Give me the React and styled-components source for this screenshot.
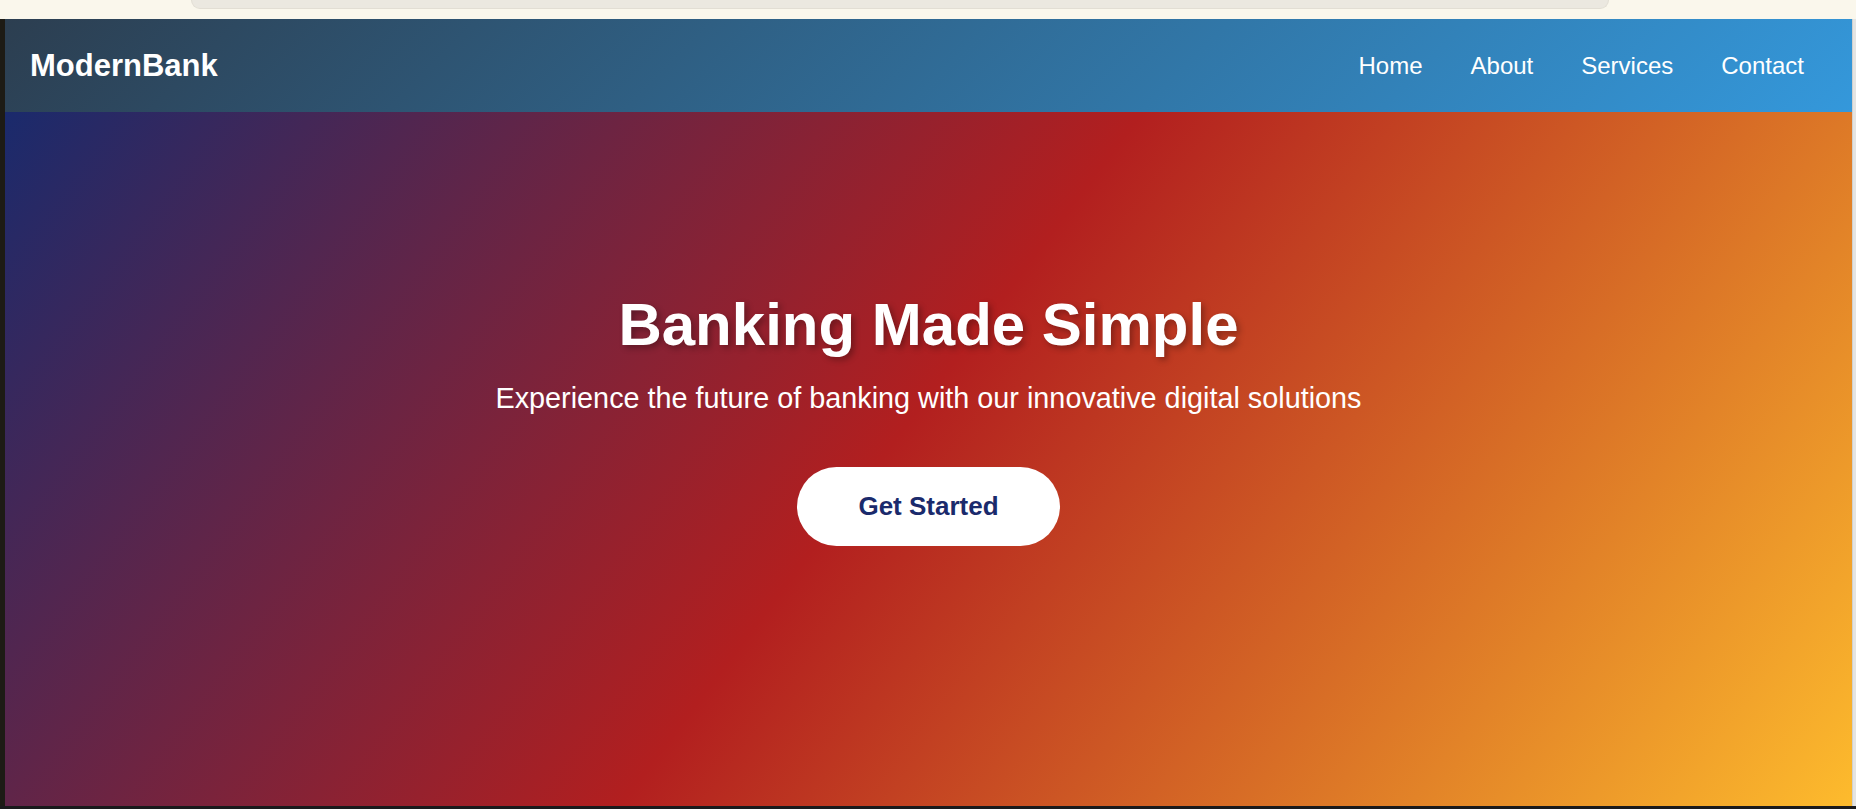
import React from 'react';
import styled, {createGlobalStyle} from 'styled-components';

const GlobalStyle = createGlobalStyle`
  html, body {
    margin: 0;
    padding: 0;
    overflow: hidden;
  }
  body {
    font-family: "Liberation Sans", Arial, sans-serif;
  }
  * {
    box-sizing: border-box;
  }
`

const links = ['Home', 'About', 'Services', 'Contact']

const App = () => {
    return (
        <Frame>
            <GlobalStyle/>
            <ChromeBar>
                <AddressPill/>
            </ChromeBar>
            <MiddleRow>
                <LeftEdge/>
                <Page>
                    <Header>
                        <Logo>ModernBank</Logo>
                        <Nav>
                            {links.map((link) => (
                                <NavLink key={link} href="#">{link}</NavLink>
                            ))}
                        </Nav>
                    </Header>
                    <Hero>
                        <Title>Banking Made Simple</Title>
                        <Subtitle>Experience the future of banking with our innovative digital solutions</Subtitle>
                        <CtaButton>Get Started</CtaButton>
                    </Hero>
                </Page>
                <ScrollTrack/>
            </MiddleRow>
            <BottomEdge/>
        </Frame>
    )
}
export default App

const Frame = styled.div`
  width: 1856px;
  height: 809px;
  display: flex;
  flex-direction: column;
  background: #1b1a16;
`

const ChromeBar = styled.div`
  height: 19px;
  flex-shrink: 0;
  background: #faf7ec;
  padding-left: 191px;
`

const AddressPill = styled.div`
  width: 1418px;
  height: 9px;
  background: #ebe8e0;
  border: 1px solid #e2ded4;
  border-top: none;
  border-radius: 0 0 12px 12px;
`

const MiddleRow = styled.div`
  flex: 1;
  display: flex;
  min-height: 0;
`

const LeftEdge = styled.div`
  width: 5px;
  background: #1d1b15;
`

const ScrollTrack = styled.div`
  width: 4px;
  background: #e4e4e2;
  border-left: 1px solid #d0d0ce;
`

const BottomEdge = styled.div`
  height: 3px;
  flex-shrink: 0;
  background: #1a1a1c;
`

const Page = styled.div`
  flex: 1;
  display: flex;
  flex-direction: column;
  min-width: 0;
`

const Header = styled.header`
  height: 93px;
  flex-shrink: 0;
  display: flex;
  align-items: center;
  justify-content: space-between;
  padding: 0 24px 0 25px;
  background: linear-gradient(135deg, #2c3e50, #3498db);
`

const Logo = styled.div`
  color: #ffffff;
  font-size: 31px;
  font-weight: 700;
  line-height: 36px;
`

const Nav = styled.nav`
  display: flex;
  align-items: center;
`

const NavLink = styled.a`
  color: #ffffff;
  text-decoration: none;
  font-size: 24px;
  line-height: 28px;
  padding: 0 24px;
`

const Hero = styled.section`
  flex: 1;
  display: flex;
  flex-direction: column;
  align-items: center;
  padding-top: 178px;
  background: linear-gradient(127deg, #1a2a6c 0%, #b21f1f 48%, #fdbb2d 100%);
  color: #ffffff;
  text-align: center;
`

const Title = styled.h1`
  margin: 0 0 23px;
  font-size: 60px;
  line-height: 69px;
  font-weight: 700;
  text-shadow: 3px 3px 6px rgba(0, 0, 0, 0.3);
`

const Subtitle = styled.p`
  margin: 0 0 52px;
  font-size: 28.8px;
  line-height: 33px;
`

const CtaButton = styled.button`
  font-family: "Liberation Sans", Arial, sans-serif;
  font-size: 26px;
  font-weight: 700;
  line-height: 31px;
  color: #1a2a6c;
  background: #ffffff;
  border: none;
  border-radius: 50px;
  padding: 24px 61px;
  cursor: pointer;
`
